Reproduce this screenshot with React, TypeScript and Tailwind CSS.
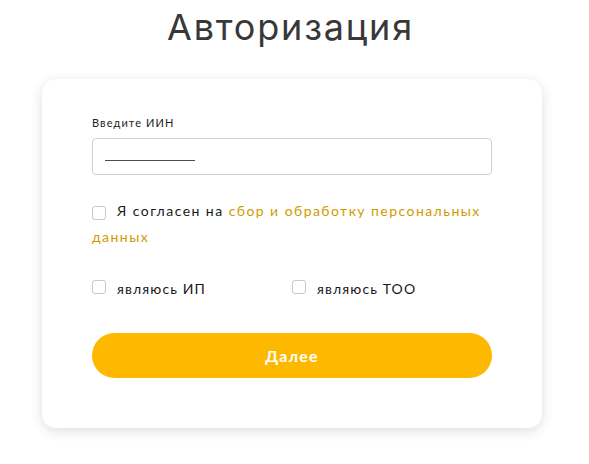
import React from "react";

const body = { fontFamily: "Lato, 'Noto Sans', sans-serif" };

function Box() {
  return (
    <span className="inline-block w-[14px] h-[14px] shrink-0 rounded-[3px] border border-[#c8c8c8] bg-white" />
  );
}

export default function App() {
  return (
    <div className="min-h-[464px] w-[589px] bg-white" style={body}>
      <h1
        className="pt-[5px] text-center text-[36px] leading-[44px] text-[#383838] tracking-[1.8px] pr-[8px]"
        style={{ fontFamily: "Inter, 'Open Sans', sans-serif", fontWeight: 400 }}
      >
        Авторизация
      </h1>
      <div className="ml-[42px] mt-[30px] w-[500px] h-[349px] rounded-[14px] bg-white shadow-[0_3px_12px_rgba(40,50,70,0.16)] px-[50px] pt-[37px]">
        <label className="block text-[11px] leading-[14px] text-[#222] tracking-[1.1px]">Введите ИИН</label>
        <div className="mt-[8px] h-[37px] w-[400px] rounded-[4px] border border-[#cdd2d9] flex items-center px-[12px]">
          <span className="mt-[8px] block h-[1px] w-[90px] bg-[#4a4f55]" />
        </div>
        <div className="mt-[28px] flex items-start gap-[11px]">
          <span className="-mt-[1px]"><Box /></span>
          <p className="text-[14px] leading-[27px] text-[#1a1a1a] -mt-[6px] tracking-[1.45px]">
            Я согласен на{" "}
            <span className="text-[#d09a00]">сбор и обработку персональных</span>
          </p>
        </div>
        <p className="text-[14px] leading-[27px] text-[#d09a00] -mt-[3px] tracking-[1.45px]">данных</p>
        <div className="mt-[28px] grid grid-cols-2 w-[400px]">
          <div className="flex items-center gap-[11px]">
            <span className="-mt-[2px]"><Box /></span>
            <span className="text-[14px] text-[#1a1a1a] leading-[20px] tracking-[1.1px]">являюсь ИП</span>
          </div>
          <div className="flex items-center gap-[11px]">
            <span className="-mt-[2px]"><Box /></span>
            <span className="text-[14px] text-[#1a1a1a] leading-[20px] tracking-[1.1px]">являюсь ТОО</span>
          </div>
        </div>
        <button className="mt-[33px] h-[45px] w-[400px] rounded-full bg-[#ffb800] text-white text-[16px] font-bold tracking-[1.2px]">
          Далее
        </button>
      </div>
    </div>
  );
}
